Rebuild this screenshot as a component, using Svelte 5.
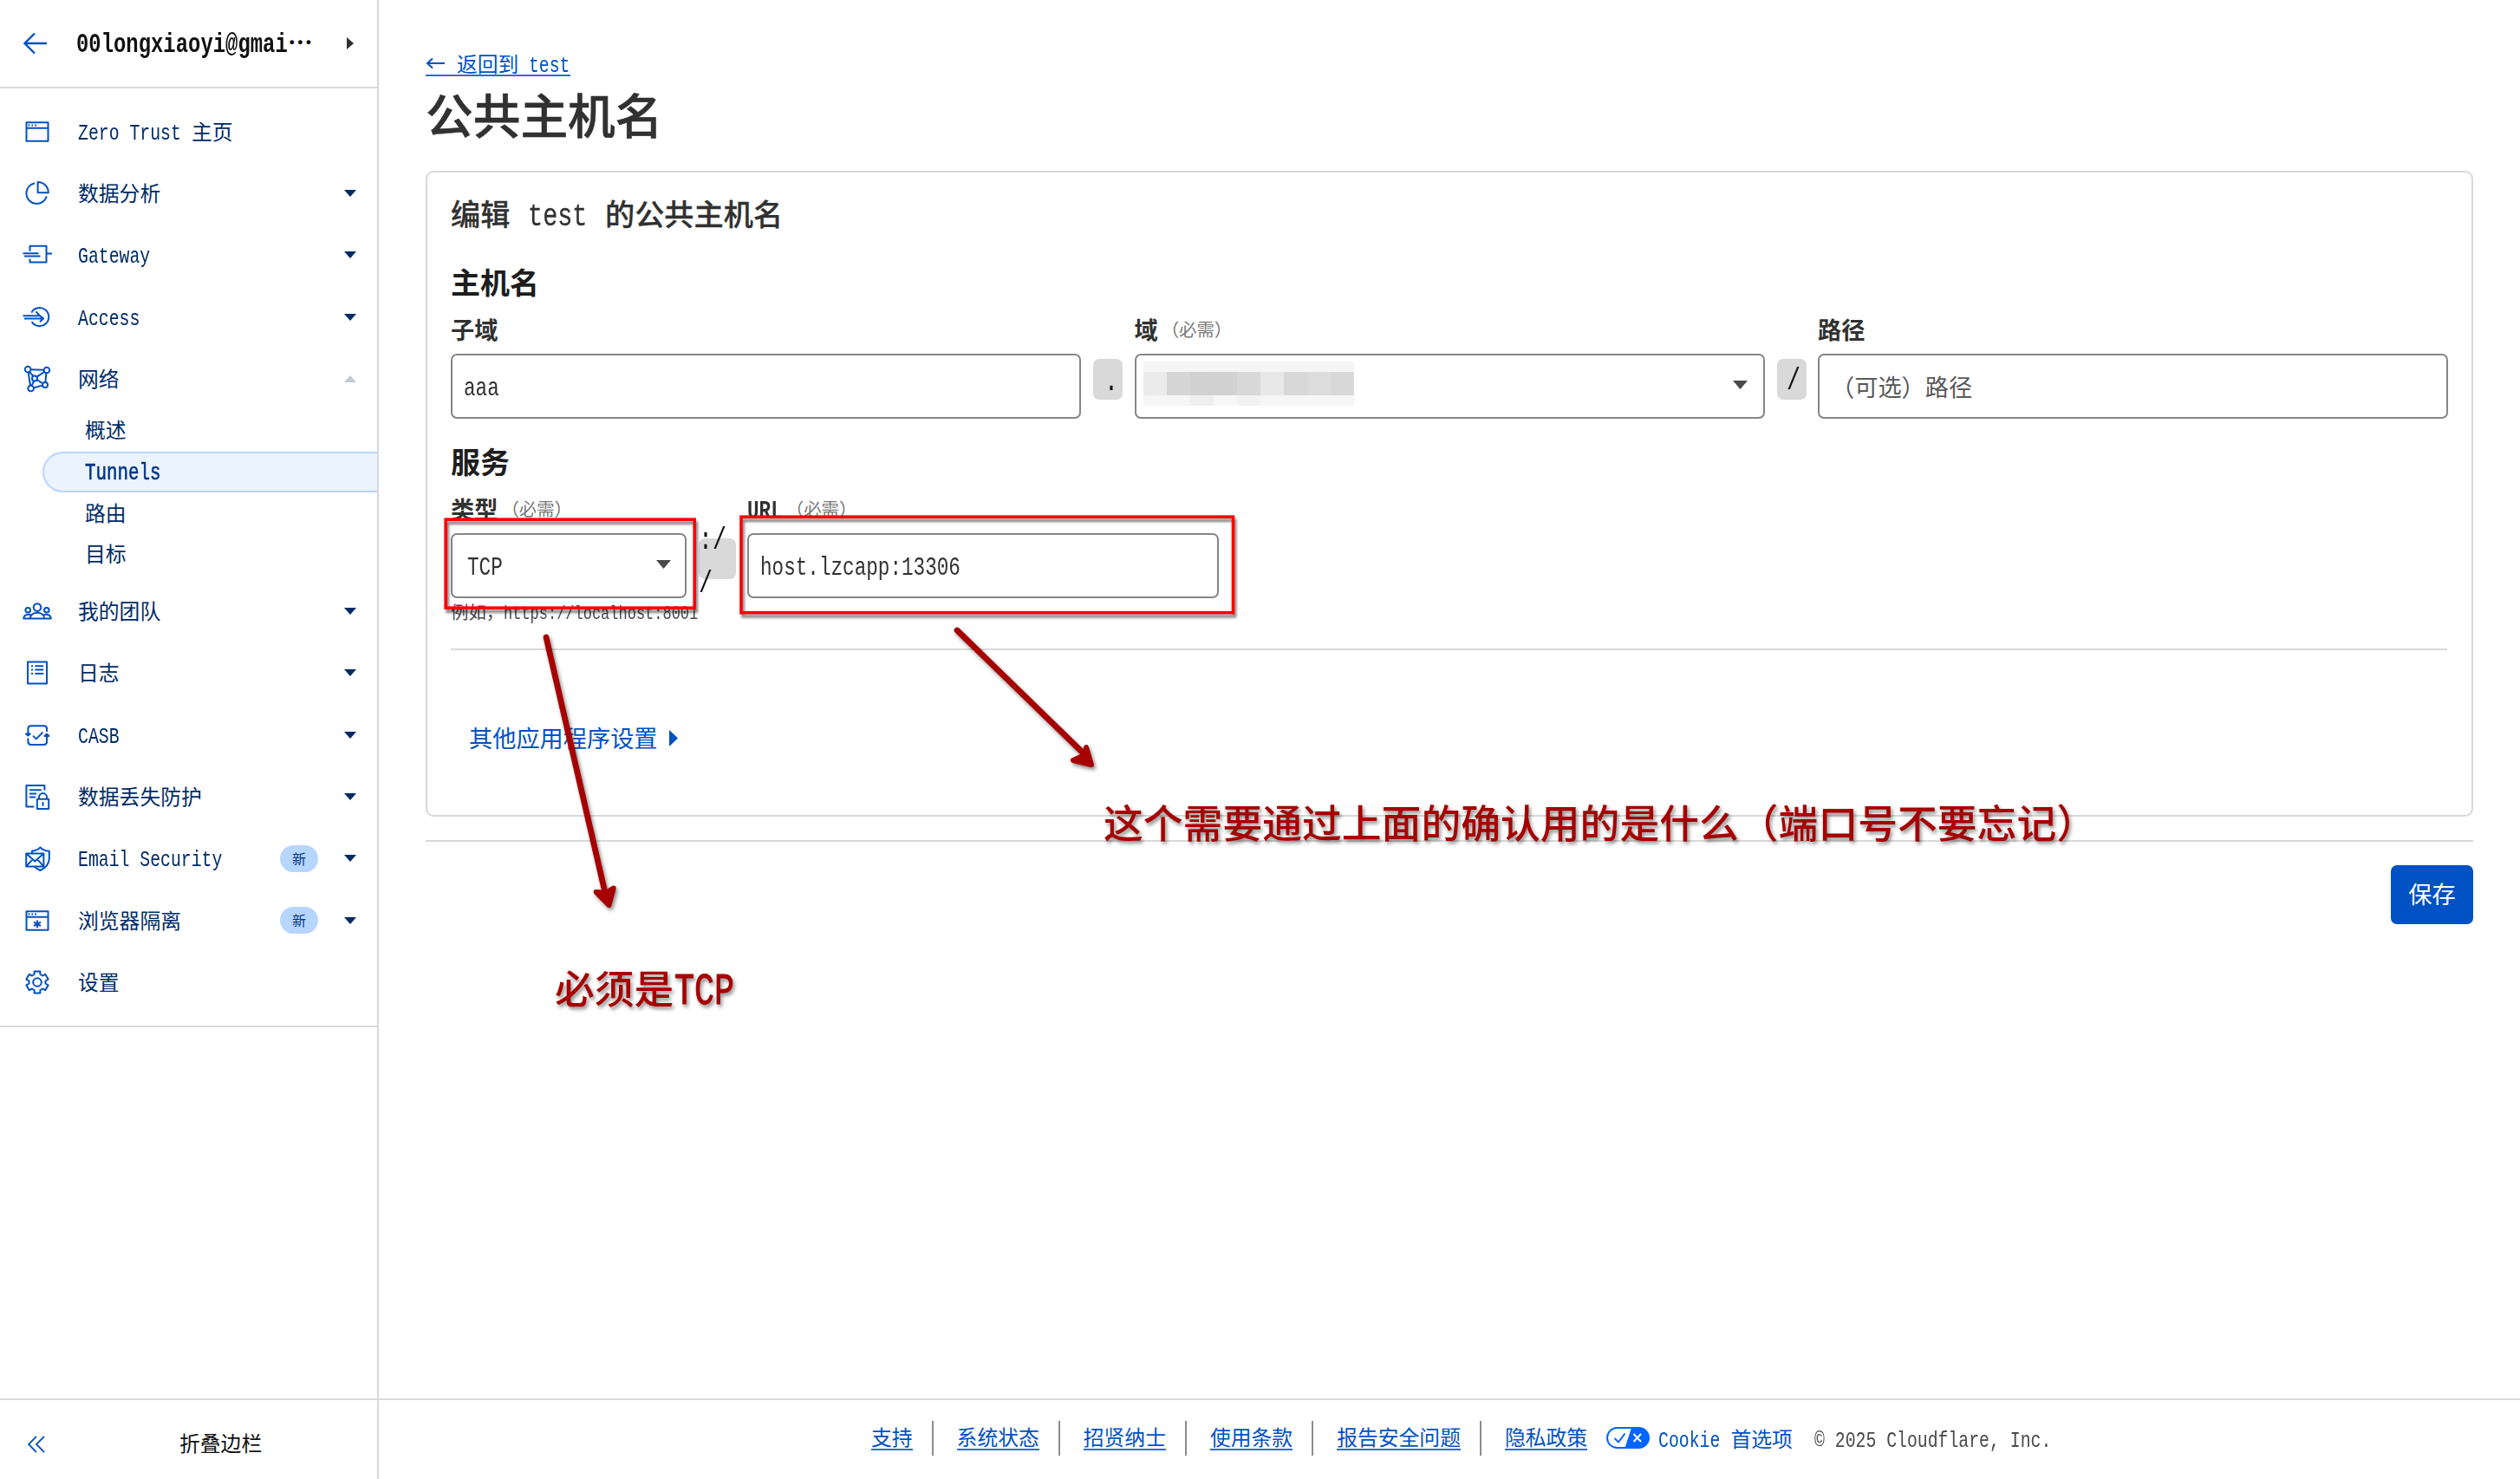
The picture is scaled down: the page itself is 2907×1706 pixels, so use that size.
<script>
  const win = 'M4.5 6.2h25v21.6h-25zM4.5 12.8h25';
  const winDots = 'M6.6 9.5h1.8M10.4 9.5h1.8M14.2 9.5h1.8';

  // Outline of a cog with six teeth, centred in the 34px icon box
  function cog() {
    const points = [];
    for (let i = 0; i < 6; i++) {
      for (const [offset, r] of [[-21, 9.6], [-15, 13], [15, 13], [21, 9.6]]) {
        const a = ((i * 60 - 90 + offset) * Math.PI) / 180;
        points.push(`${(17 + r * Math.cos(a)).toFixed(1)} ${(17 + r * Math.sin(a)).toFixed(1)}`);
      }
    }
    return `M${points.join('L')}z`;
  }

  const nav = [
    { label: 'Zero Trust 主页', paths: [win, winDots] },
    { label: '数据分析', caret: true, paths: ['M14 5.2A12 12 0 1 0 27.8 20.5', 'M17.6 4V16.2H29.8A12.2 12.2 0 0 0 17.6 4z'] },
    { label: 'Gateway', caret: true, paths: ['M8.5 12.7V6.7H27.5V25.5H8.5V21.4', 'M.5 15.2H18.5M2 18.4H20.5M27.5 15.6H34'] },
    { label: 'Access', caret: true, paths: ['M10.3 11.6A10.6 10.6 0 1 1 10.6 22', 'M.5 15.2H20L15.4 10.4M2 18.4H24L20 22.2M20 15.2L24 18.4'] },
    {
      label: '网络', open: true,
      paths: ['M9.4 6.2L24.6 6.8M6.6 9.4L9 24.7M7.8 8.8L12.4 13.7M25.3 8.8L16.5 14.6M27.4 10.2L26.4 20.8M16.4 18L23.6 22.4M13.2 19.2L10.6 24.8M12.8 27.2L23 24.6',
        'M2.8 6a3.3 3.3 0 1 0 6.6 0a3.3 3.3 0 1 0-6.6 0M24.6 7a3.3 3.3 0 1 0 6.6 0a3.3 3.3 0 1 0-6.6 0M11 16.4a3 3 0 1 0 6 0a3 3 0 1 0-6 0M23 24a3 3 0 1 0 6 0a3 3 0 1 0-6 0M6.3 28a3.3 3.3 0 1 0 6.6 0a3.3 3.3 0 1 0-6.6 0'],
      children: ['概述', 'Tunnels', '路由', '目标']
    },
    { label: '我的团队', caret: true, paths: ['M12.7 12.6a4.3 4.3 0 1 0 8.6 0a4.3 4.3 0 1 0-8.6 0M3.4 15.8a2.8 2.8 0 1 0 5.6 0a2.8 2.8 0 1 0-5.6 0M25 15.8a2.8 2.8 0 1 0 5.6 0a2.8 2.8 0 1 0-5.6 0', 'M8.8 25.6c0-9 16.4-9 16.4 0M9.6 21.2c-4-1.2-8.2 0-8.4 4.4h31.6c-.2-4.4-4.4-5.6-8.4-4.4'] },
    { label: '日志', caret: true, paths: ['M6 4.4h22v25.2H6z', 'M10 9.2h2M14.4 9.2h9.8M10 13.6h2M14.4 13.6h9.8M10 18h2M14.4 18h9.8'] },
    { label: 'CASB', caret: true, paths: ['M6.4 15V9.6q0-3.4 3.4-3.4H24.6q3.4 0 3.4 3.4V13M6.4 20.6V24.6q0 3.4 3.4 3.4H24.6q3.4 0 3.4-3.4V17', 'M12 17.6L15.8 21.4L23.4 13.6M4 15.4h4.8L6.4 17.6zM25.6 18h4.8L28 15.6z'] },
    { label: '数据丢失防护', caret: true, paths: ['M13.4 28.6H4.4V4H25.4V9.6', 'M8 9.2H21.8M8 13.4H16M8 17.6H15M16.8 19.8H30.2V31H16.8zM19 19.4V17.6a4.5 4.5 0 0 1 9 0V19.4M23.5 23.4V27.8M22.6 24h1.8'] },
    { label: 'Email Security', caret: true, badge: '新', paths: ['M4.2 11.6H24.4V26.4H4.2zM4.2 11.6L14.3 20.6L24.4 11.6M4.2 26.4L11.4 18.4M24.4 26.4L17.2 18.4', 'M11 11.2V8.6Q16.6 8.4 20.4 4.4Q24.8 8.4 30.8 8.8V17.4Q30.4 26.4 20.4 31Q16 29 13.8 26.6'] },
    { label: '浏览器隔离', caret: true, badge: '新', paths: [win, winDots, 'M17 16.4V25.2M13 18.6L21 23M21 18.6L13 23'] },
    { label: '设置', paths: [cog(), 'M12.2 17a4.8 4.8 0 1 0 9.6 0a4.8 4.8 0 1 0-9.6 0'] }
  ];

  const footerLinks = ['支持', '系统状态', '招贤纳士', '使用条款', '报告安全问题', '隐私政策'];

  const mosaic = [
    '#f5f5f5', '#f5f5f5', '#f5f5f5', '#f5f5f5', '#f5f5f5', '#f5f5f5', '#f5f5f5', '#f5f5f5', '#f5f5f5',
    '#ebebeb', '#d5d5d5', '#d1d1d1', '#d2d2d2', '#d8d8d8', '#e8e8e8', '#d8d8d8', '#dcdcdc', '#d8d8d8',
    '#f6f6f6', '#f6f6f6', '#efefef', '#f7f7f7', '#f2f2f2', '#f6f6f6', '#f6f6f6', '#f6f6f6', '#f6f6f6'
  ];

  // Latin runs are set in half-em cells so that two letters line up with one Han character
  const split = (text) => text.match(/[\x20-\x7e©]+|[^\x20-\x7e©]+/g) ?? [];
  const isLatin = (run) => /^[\x20-\x7e©]/.test(run);
</script>

{#snippet t(text)}<span class="text">{#each split(text) as run}{#if isLatin(run)}<span class="half" style:width="{run.length * 0.5}em"><span class="squeeze">{run}</span></span>{:else}{run}{/if}{/each}</span>{/snippet}

<div class="app">
  <aside class="sidebar">
    <header class="account">
      <svg class="back" viewBox="0 0 28 26"><path d="M27 13H2M13 1.5L1.5 13L13 24.5" /></svg>
      <strong class="email">{@render t('00longxiaoyi@gmai')}<span class="dots">⋯</span></strong>
      <svg class="account-caret" viewBox="0 0 8 14"><path d="M0 0L8 7L0 14z" /></svg>
    </header>
    <nav>
      {#each nav as item}
        <div class="row">
          <svg class="icon" viewBox="0 0 34 34">{#each item.paths as d}<path {d} />{/each}</svg>
          <span class="label">{@render t(item.label)}</span>
          {#if item.badge}<span class="badge">{item.badge}</span>{/if}
          {#if item.caret}<svg class="caret" viewBox="0 0 14 8"><path d="M0 0H14L7 8z" /></svg>{/if}
          {#if item.open}<svg class="caret open" viewBox="0 0 14 8"><path d="M0 8H14L7 0z" /></svg>{/if}
        </div>
        {#if item.children}
          <div class="children">
            {#each item.children as child}
              <div class="child" class:active={child === 'Tunnels'}>{@render t(child)}</div>
            {/each}
          </div>
        {/if}
      {/each}
    </nav>
    <div class="collapse">
      <svg viewBox="0 0 20 20"><path d="M10 .8L1 10L10 19.2M19 .8L10 10L19 19.2" /></svg>
      <span>折叠边栏</span>
    </div>
  </aside>

  <div class="page">
    <main>
      <a class="return" href="#back"><svg viewBox="0 0 24 16"><path d="M22 8H2M8 2.5L2 8L8 13.5" /></svg>{@render t(' 返回到 test')}</a>
      <h1>公共主机名</h1>

      <section class="card">
        <h2>{@render t('编辑 test 的公共主机名')}</h2>

        <h3>主机名</h3>
        <div class="fields">
          <div class="field">
            <div class="name">子域</div>
            <div class="control">{@render t('aaa')}</div>
          </div>
          <div class="joint dot">{@render t('.')}</div>
          <div class="field">
            <div class="name">域<small>（必需）</small></div>
            <div class="control select domain">
              <div class="mosaic">{#each mosaic as color}<i style:background={color}></i>{/each}</div>
              <svg class="arrow" viewBox="0 0 17 10"><path d="M0 0H17L8.5 10z" /></svg>
            </div>
          </div>
          <div class="joint">{@render t('/')}</div>
          <div class="field">
            <div class="name">路径</div>
            <div class="control placeholder">{@render t('（可选）路径')}</div>
          </div>
        </div>

        <h3 class="service">服务</h3>
        <div class="fields">
          <div class="field type">
            <div class="name">类型<small>（必需）</small></div>
            <div class="control select tcp">
              {@render t('TCP')}
              <svg class="arrow" viewBox="0 0 17 10"><path d="M0 0H17L8.5 10z" /></svg>
            </div>
            <div class="hint">{@render t('例如，https://localhost:8001')}</div>
          </div>
          <div class="joint scheme">{@render t(':/')}{@render t('/')}</div>
          <div class="field url">
            <div class="name">{@render t('URL')}<small>（必需）</small></div>
            <div class="control">{@render t('host.lzcapp:13306')}</div>
          </div>
        </div>
        <div class="rule"></div>
        <div class="more"><span>其他应用程序设置</span><svg viewBox="0 0 10 19"><path d="M0 0L10 9.5L0 19z" /></svg></div>
      </section>

      <div class="actions"><button>保存</button></div>
    </main>

    <footer>
      {#each footerLinks as link, i}
        <div class="footer-item" class:divided={i < footerLinks.length - 1}><a href="#footer">{link}</a></div>
      {/each}
      <svg class="privacy" viewBox="0 0 50 25">
        <rect class="pill" x="1" y="1" width="48" height="23" rx="11.5" />
        <path class="right" d="M29 1H37.5A11.5 11.5 0 0 1 37.5 24H21.5z" />
        <path class="tick" d="M9.5 13L14 17.5L21.5 7.5" />
        <path class="cross" d="M31.5 8L40 17M40 8L31.5 17" />
      </svg>
      <span class="cookie">{@render t('Cookie 首选项')}</span>
      <span class="copyright">{@render t('© 2025 Cloudflare, Inc.')}</span>
    </footer>
  </div>

  <svg class="notes" viewBox="0 0 2907 1706">
    <g class="frame">
      <rect x="514.2" y="599.2" width="287" height="102" />
      <rect x="855" y="596.2" width="567.5" height="110.5" />
    </g>
    <g class="pointer">
      <path d="M630 735L699 1034" />
      <path class="head" d="M687.6 1029L702.4 1044L707.7 1024.5L699 1030z" />
      <path d="M1104 727L1253 872" />
      <path class="head" d="M1238 877L1259 882L1253 862L1251 871z" />
    </g>
    <g class="remark">
      <text x="640" y="1158">必须是</text>
      <text class="latin" x="778" y="1158" textLength="69" lengthAdjust="spacingAndGlyphs">TCP</text>
      <text x="1273" y="967" textLength="1145">这个需要通过上面的确认用的是什么（端口号不要忘记）</text>
    </g>
  </svg>
</div>

<style>
  :global(body) { margin: 0; background: #fff; overflow: hidden; }
  :global(*) { box-sizing: border-box; }

  .app {
    position: relative;
    display: flex;
    width: 2907px;
    height: 1706px;
    font: 23.8px/36px 'Noto Sans CJK SC', sans-serif;
    color: #313131;
    background: #fff;
    overflow: hidden;
  }
  .text { white-space: pre; }
  .half { display: inline-block; white-space: pre; line-height: 1; text-align: left; }
  .squeeze {
    display: inline-block;
    font-family: 'Liberation Mono', monospace;
    font-size: 1.1em;
    line-height: 1;
    transform: scaleX(0.757);
    transform-origin: 0 50%;
  }
  svg { display: block; flex: none; fill: none; }

  .sidebar { display: flex; flex-direction: column; width: 437px; border-right: 2px solid #d9d9d9; flex: none; }
  .account { display: flex; align-items: center; height: 102px; padding-left: 27px; border-bottom: 2px solid #d9d9d9; color: #111; }
  .back { width: 28px; height: 26px; stroke: #0051c3; stroke-width: 2.3; }
  .email { width: 345px; padding: 0 0 2px 33px; font-size: 28.7px; font-weight: 700; white-space: nowrap; flex: none; }
  .dots { display: inline-block; width: 28px; }
  .account-caret { width: 8px; height: 14px; fill: #313131; }

  nav { padding: 14px 0 13.7px; border-bottom: 2px solid #d9d9d9; color: #002b66; }
  .row { display: flex; align-items: center; height: 71.4px; padding: 0 24px 0 26px; }
  .icon { width: 34px; height: 34px; stroke: #0051c3; stroke-width: 2; stroke-linejoin: round; }
  .label { flex: 1; padding: 0 0 2px 30px; white-space: nowrap; }
  .badge { width: 44px; height: 31px; margin-right: 30px; border-radius: 16px; background: #b6d5ff; color: #003682; font-size: 16px; line-height: 30px; text-align: center; }
  .caret { width: 14px; height: 8px; fill: #002b66; }
  .caret.open { fill: #bfc9d9; }
  .children { padding: 0 0 5.4px 49px; }
  .child { display: flex; align-items: center; height: 47.7px; padding: 0 0 3px 47px; border: 2px solid transparent; border-right: 0; }
  .child.active { padding-bottom: 5px; border-color: #b6d5ff; border-radius: 24px 0 0 24px; background: #ebf3ff; color: #003682; font-size: 25px; -webkit-text-stroke: 0.6px; }
  .collapse { display: flex; align-items: center; height: 93px; margin-top: auto; padding: 10px 0 0 32px; border-top: 2px solid #d9d9d9; color: #111; }
  .collapse svg { width: 20px; height: 20px; stroke: #0051c3; stroke-width: 1.8; }
  .collapse span { padding: 0 0 3px 155px; }

  .page { display: flex; flex-direction: column; width: 2470px; }
  main { flex: 1; padding: 56px 54px 0; }
  .return { display: flex; align-items: center; width: 167px; height: 32px; padding-top: 3px; border-bottom: 2px solid #2a6dcc; color: #0051c3; text-decoration: none; white-space: pre; }
  .return svg { width: 24px; height: 16px; stroke: #0051c3; stroke-width: 2; }
  h1, h2, h3 { margin: 0; font-weight: 500; }
  h1 { padding-top: 7px; font-size: 54.7px; line-height: 72px; -webkit-text-stroke: 0.6px; }
  .card { height: 745px; margin-top: 30px; padding: 20px 28px 0 27px; border: 2px solid #d9d9d9; border-radius: 9px; }
  h2 { font-size: 34.2px; line-height: 52px; -webkit-text-stroke: 0.3px; }
  h2 :global(.half) { margin: 0 3.5px; }
  h3 { margin-top: 28px; font-size: 34px; line-height: 52px; font-weight: 700; color: #1d1d1d; }
  h3.service { margin-top: 23px; }
  .fields { display: flex; align-items: flex-start; font-size: 27.2px; }
  .field { width: 727px; flex: none; }
  .name { height: 57px; line-height: 52px; padding-bottom: 2px; font-weight: 600; white-space: nowrap; display: flex; align-items: center; }
  small { padding-left: 4px; font-size: 20.4px; font-weight: 400; color: #797979; }
  .control { display: flex; align-items: center; height: 75px; padding: 0 13px 2px; border: 2px solid #868686; border-radius: 7px; }
  .placeholder { color: #595959; }
  .select { justify-content: space-between; padding-right: 16px; }
  .tcp { padding-left: 17px; }
  .domain { padding-left: 8px; padding-right: 18px; }
  .arrow { width: 17px; height: 10px; fill: #4a4a4a; margin-bottom: 2px; }
  .mosaic { display: grid; grid-template-columns: repeat(9, 27px); grid-template-rows: 12px 27px 12px; margin-bottom: 4px; }
  .joint { display: flex; justify-content: center; align-items: center; width: 34px; height: 47px; margin: 63px 13.5px 0 14px; padding-left: 4px; border-radius: 7px; background: #d9d9d9; color: #111; font-size: 32px; flex: none; }
  .dot { padding: 2px 0 0 7px; }
  .type { width: 272px; }
  .scheme { flex-direction: column; align-items: flex-start; justify-content: center; gap: 8px; width: 43px; margin: 63px 13.5px 0; padding: 4px 0 0; }
  .url { width: 544px; }
  .hint { width: 300px; font-size: 20.4px; line-height: 30px; color: #4a4a4a; }
  .service + .fields { height: 165px; }
  .rule { margin-top: 25px; border-top: 2px solid #d9d9d9; }
  .more { display: flex; align-items: center; gap: 13px; padding: 82px 0 0 21px; font-size: 27.2px; color: #0051c3; }
  .more span { padding-bottom: 2px; }
  .more svg { width: 10px; height: 19px; fill: #0051c3; }
  .actions { display: flex; justify-content: flex-end; margin-top: 27px; padding-top: 27px; border-top: 2px solid #d9d9d9; }
  button { width: 95px; height: 68px; padding: 0 0 3px; border: 0; border-radius: 7px; background: #0051c3; color: #fff; font: 27.2px/65px 'Noto Sans CJK SC', sans-serif; }

  footer { display: flex; align-items: center; height: 93px; padding: 0 0 4px 568px; border-top: 2px solid #d9d9d9; white-space: nowrap; }
  .footer-item { height: 40px; padding: 6px 22px 0 0; }
  .footer-item.divided { margin-right: 27px; border-right: 2px solid #8c8c8c; }
  .footer-item a { display: block; height: 28px; line-height: 24px; border-bottom: 2px solid #2a6dcc; color: #0051c3; text-decoration: none; }
  .privacy { width: 50px; height: 25px; }
  .pill { fill: #fff; stroke: #0066ff; stroke-width: 2; }
  .right { fill: #0066ff; }
  .tick { stroke: #0066ff; stroke-width: 2; }
  .cross { stroke: #fff; stroke-width: 2; }
  .cookie { margin-left: 10px; color: #0051c3; }
  .copyright { margin-left: 25px; color: #4a4a4a; }

  /* Hand-drawn annotations that lie over the form */
  .notes { position: absolute; inset: 0; width: 2907px; height: 1706px; pointer-events: none; }
  .frame { stroke: #f00; stroke-width: 3.6; filter: drop-shadow(2.5px 4px 1.5px rgba(0, 0, 0, 0.5)); }
  .pointer { stroke: #a60000; stroke-width: 6.8; stroke-linecap: round; stroke-linejoin: round; filter: drop-shadow(2px 3px 2px rgba(0, 0, 0, 0.45)); }
  .head { fill: #a60000; stroke-width: 6; }
  .remark { fill: #a60000; font-size: 45.8px; font-weight: 500; filter: drop-shadow(2px 3px 2px rgba(0, 0, 0, 0.45)); }
  .latin { font-family: 'Liberation Mono', monospace; font-size: 51px; stroke: #a60000; stroke-width: 1; }
</style>
